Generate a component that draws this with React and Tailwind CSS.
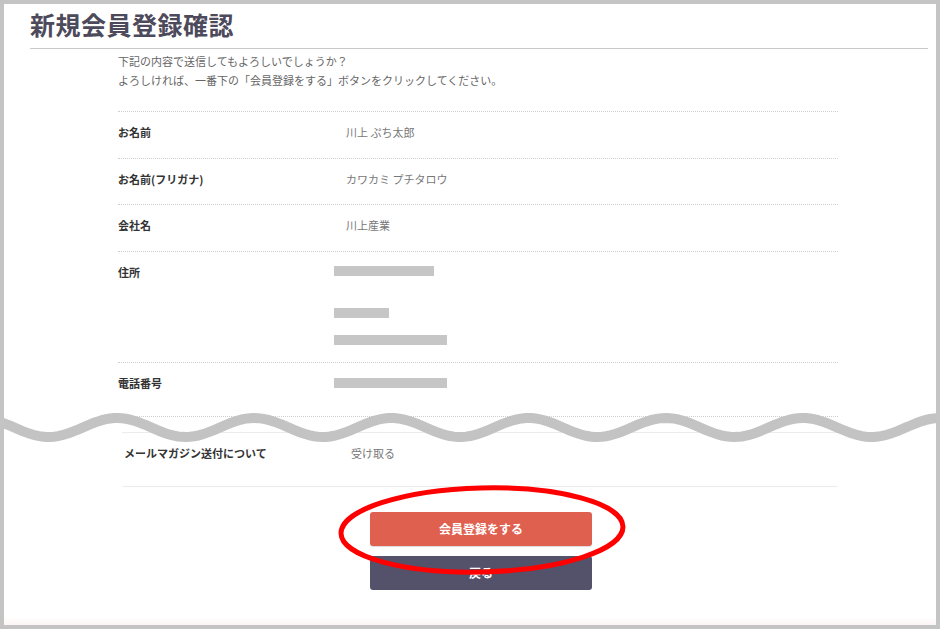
import React from 'react';

const font = { fontFamily: '"Noto Sans CJK JP", "Noto Sans", sans-serif' };

function wavePath() {
  // sine wave: peaks near x=117 + n*137.2, centre y=427.5
  const pts = [];
  for (let x = -10; x <= 950; x += 4) {
    const y = 427.5 - 9.5 * Math.cos(((x - 117) / 137.2) * Math.PI * 2);
    pts.push(`${x},${y.toFixed(2)}`);
  }
  return 'M' + pts.join(' L');
}

const rows = [
  { label: 'お名前', value: '川上 ぷち太郎', h: 'h-[47px]' },
  { label: 'お名前(フリガナ)', value: 'カワカミ プチタロウ', h: 'h-[46px]' },
  { label: '会社名', value: '川上産業', h: 'h-[47px]' },
];

const Bar = ({ w }) => <div className={`h-[10px] bg-[#c6c6c6] ${w}`} />;

export default function App() {
  return (
    <div style={font} className="relative w-[940px] h-[629px] overflow-hidden bg-white border-4 border-[#c4c4c4]">
      <div className="ml-[26px] mr-[8px] h-[45px] border-b border-[#c9c9c9]">
        <h1 className="text-[25px] leading-[40px] font-bold text-[#4c4a5b] tracking-[0.5px]">新規会員登録確認</h1>
      </div>

      <div className="ml-[114px] w-[720px]">
        <div className="pt-[3px] text-[11px] leading-[19px] text-[#666]">
          <p>下記の内容で送信してもよろしいでしょうか？</p>
          <p>よろしければ、一番下の「会員登録をする」ボタンをクリックしてください。</p>
        </div>

        <div className="mt-[21px] text-[11px] leading-[16px]">
          {rows.map((r) => (
            <div key={r.label} className={`flex border-t border-dotted border-[#cfcfcf] ${r.h}`}>
              <div className="w-[228px] pt-[12px] font-bold text-[#333]">{r.label}</div>
              <div className="pt-[12px] text-[#777]">{r.value}</div>
            </div>
          ))}
          <div className="flex h-[111px] border-t border-dotted border-[#cfcfcf]">
            <div className="w-[216px] pt-[12px] font-bold text-[#333]">住所</div>
            <div className="pt-[14px] flex flex-col">
              <Bar w="w-[100px]" />
              <div className="h-[32px]" />
              <Bar w="w-[55px]" />
              <div className="h-[17px]" />
              <Bar w="w-[113px]" />
            </div>
          </div>
          <div className="flex h-[55px] border-t border-b border-dotted border-[#cfcfcf]">
            <div className="w-[216px] pt-[12px] font-bold text-[#333]">電話番号</div>
            <div className="pt-[15px]">
              <Bar w="w-[113px]" />
            </div>
          </div>
        </div>
      </div>

      <div className="ml-[118px] mt-[15px] w-[716px] text-[11px] leading-[16px]">
        <div className="flex h-[55px] border-t border-b border-[#ececec]">
          <div className="w-[229px] pt-[12px] pl-[2px] font-bold text-[#333]">メールマガジン送付について</div>
          <div className="pt-[12px] text-[#777]">受け取る</div>
        </div>
      </div>

      <div className="mt-[25px] flex flex-col items-center gap-[10px] pl-[22px]">
        <button className="w-[222px] h-[34px] rounded-[3px] bg-[#e0604f] text-white text-[12px] font-bold shadow-[0_1px_1px_rgba(0,0,0,0.15)]">
          会員登録をする
        </button>
        <button className="w-[222px] h-[34px] rounded-[3px] bg-[#54526a] text-white text-[12px] font-bold">
          戻る
        </button>
      </div>

      <div className="absolute left-0 right-0 bottom-0 h-[8px] bg-gradient-to-b from-white to-[#fcf4f5]" />

      <svg className="absolute left-[-4px] top-[-4px]" width="940" height="629" viewBox="0 0 940 629">
        <path d={wavePath()} fill="none" stroke="#c3c3c3" strokeWidth="10" />
        <ellipse cx="482" cy="530" rx="141" ry="42" fill="none" stroke="#ff0000" strokeWidth="5" transform="rotate(-1.4 482 530)" />
      </svg>
    </div>
  );
}
